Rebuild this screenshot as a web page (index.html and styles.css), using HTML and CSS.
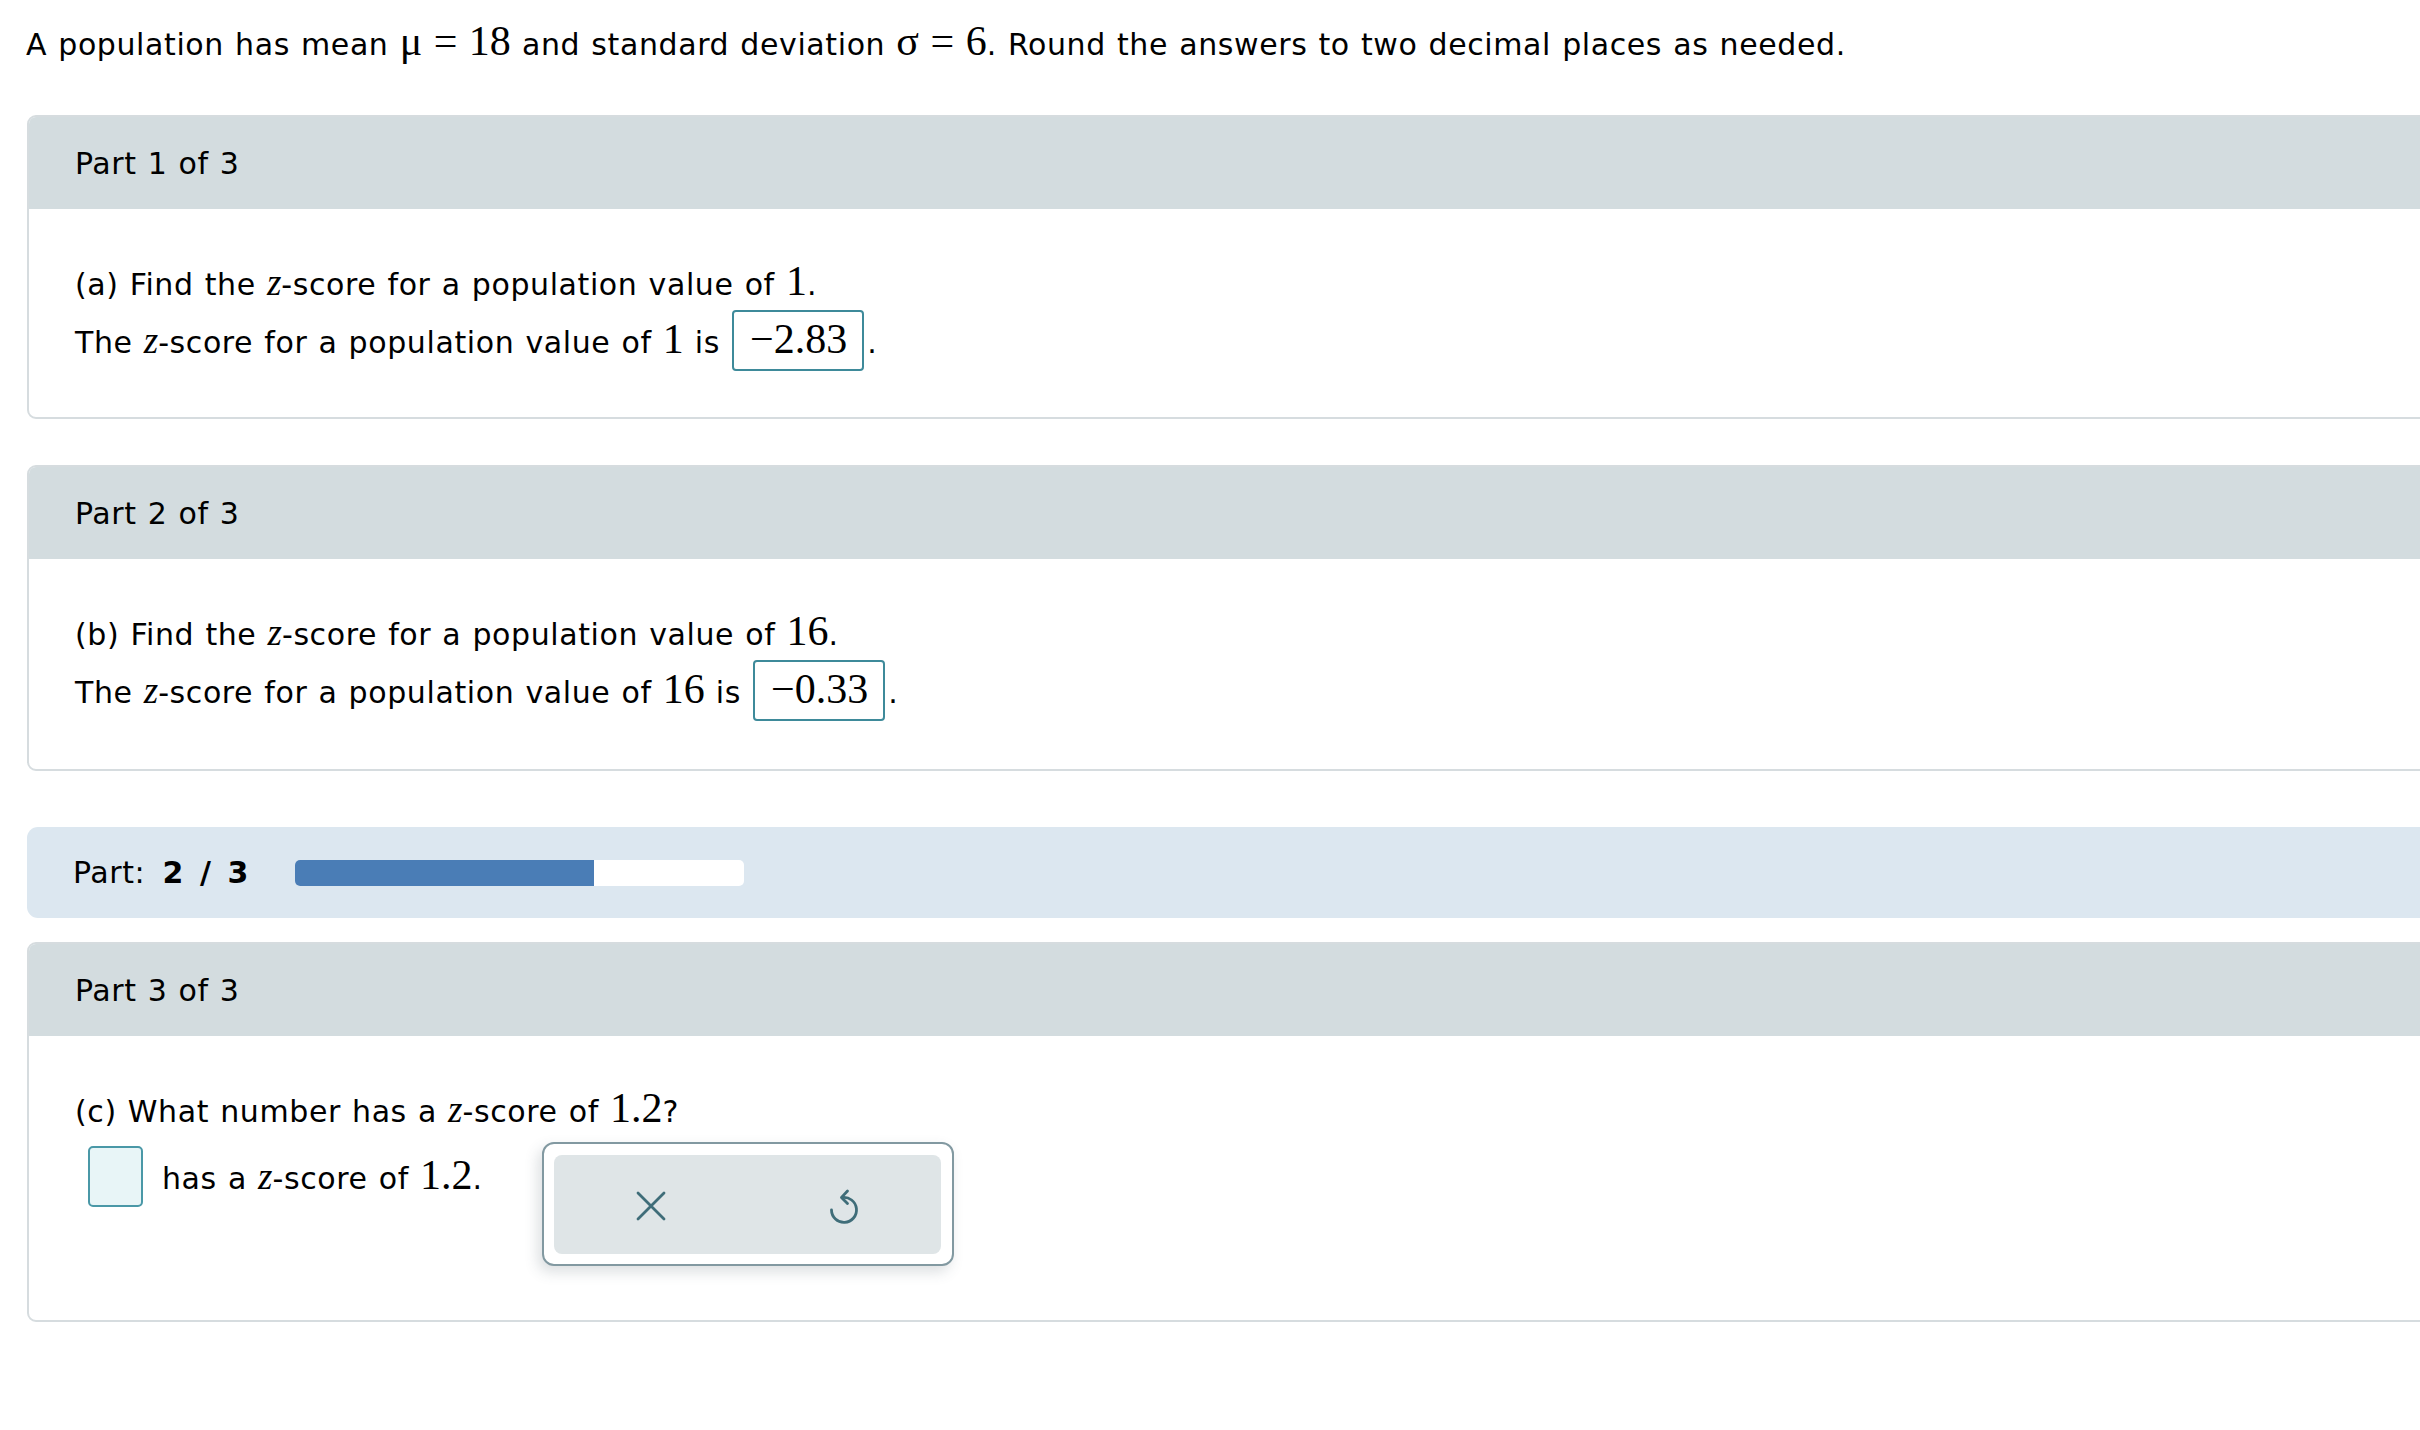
FILE: index.html
```html
<!DOCTYPE html>
<html>
<head>
<meta charset="utf-8">
<link rel="stylesheet" href="styles.css">
</head>
<body>
<div class="page">
  <div class="intro">A population has mean <span class="m">μ = 18</span> and standard deviation <span class="m">σ = 6</span>. Round the answers to two decimal places as needed.</div>

  <section class="card">
    <div class="card-head">Part 1 of 3</div>
    <div class="card-body">
      <div class="line">(a) Find the <i class="mi">z</i>-score for a population value of <span class="m">1</span>.</div>
      <div class="line2">
        <span class="txt">The <i class="mi">z</i>-score for a population value of <span class="m">1</span> is</span>
        <span class="ans">−2.83</span>
        <span class="txt dot">.</span>
      </div>
    </div>
  </section>

  <section class="card card-two">
    <div class="card-head">Part 2 of 3</div>
    <div class="card-body">
      <div class="line">(b) Find the <i class="mi">z</i>-score for a population value of <span class="m">16</span>.</div>
      <div class="line2">
        <span class="txt">The <i class="mi">z</i>-score for a population value of <span class="m">16</span> is</span>
        <span class="ans">−0.33</span>
        <span class="txt dot">.</span>
      </div>
    </div>
  </section>

  <div class="progress">
    <span class="prog-label">Part: <b>2 / 3</b></span>
    <div class="track"><div class="fill" style="width: 66.67%"></div></div>
  </div>

  <section class="card card-last">
    <div class="card-head">Part 3 of 3</div>
    <div class="card-body body-last">
      <div class="line">(c) What number has a <i class="mi">z</i>-score of <span class="m">1.2</span>?</div>
      <div class="line2 line2-c">
        <span class="input">&nbsp;</span>
        <span class="txt after-input">has a <i class="mi">z</i>-score of <span class="m">1.2</span>.</span>
        <div class="popup">
          <div class="popup-inner">
            <button class="tool" aria-label="Clear">
              <svg width="30" height="30" viewBox="0 0 30 30"><path d="M2 2 L28 28 M28 2 L2 28" fill="none" stroke="#3f6d79" stroke-width="2.8" stroke-linecap="round"/></svg>
            </button>
            <button class="tool" aria-label="Undo">
              <svg width="34" height="40" viewBox="0 0 34 40"><path d="M15 11.6 A12.5 12.5 0 1 1 4.5 24" fill="none" stroke="#3f6d79" stroke-width="2.8" stroke-linecap="round"/><path d="M20.5 5 L14.5 11.4 L20.5 17.5" fill="none" stroke="#3f6d79" stroke-width="2.8" stroke-linecap="round" stroke-linejoin="round"/></svg>
            </button>
          </div>
        </div>
      </div>
    </div>
  </section>
</div>
</body>
</html>
```

FILE: styles.css
```css
html, body {
  margin: 0;
  padding: 0;
  overflow: hidden;
  background: #ffffff;
}

.page {
  font-family: "DejaVu Sans", Verdana, sans-serif;
  font-size: 30px;
  color: #000;
  padding: 25px 0 0 27px;
  overflow: hidden;
  letter-spacing: 0.6px;
}

.intro {
  line-height: 40px;
  margin-left: -1px;
  word-spacing: 1px;
}

.m {
  font-family: "Liberation Serif", "Times New Roman", serif;
  font-size: 42px;
  line-height: 0;
  letter-spacing: 0;
}

.mi {
  font-family: "Liberation Serif", "Times New Roman", serif;
  font-style: italic;
  font-size: 37px;
  line-height: 0;
  letter-spacing: 0;
}

.card {
  margin-top: 50px;
  margin-right: -60px;
  border: 2px solid #d6dcdf;
  border-radius: 9px;
  overflow: hidden;
  background: #fff;
}

.card + .card {
  margin-top: 46px;
}

.card-head {
  background: #d3dcdf;
  height: 92px;
  display: flex;
  align-items: center;
  padding-left: 46px;
  word-spacing: 1px;
}

.card-body {
  padding: 56px 0 46px 46px;
}

.card-two .card-body {
  padding-bottom: 48px;
}

.line {
  line-height: 40px;
  word-spacing: 1px;
}

.line2 {
  display: flex;
  align-items: baseline;
  margin-top: 5px;
  position: relative;
}

.txt {
  line-height: 40px;
  word-spacing: 1px;
  white-space: nowrap;
}

.ans {
  font-family: "Liberation Serif", "Times New Roman", serif;
  font-size: 42px;
  line-height: 42px;
  letter-spacing: 0;
  border: 2px solid #3e8a9a;
  border-radius: 4px;
  padding: 6px 15px 9px 16px;
  margin-left: 12px;
  margin-right: 3px;
  white-space: nowrap;
}

.progress {
  margin-top: 56px;
  margin-right: -60px;
  height: 91px;
  background: #dce7f0;
  border-radius: 11px;
  display: flex;
  align-items: center;
  padding-left: 46px;
}

.prog-label {
  word-spacing: 2px;
}

.prog-label b {
  font-weight: bold;
  margin-left: 5px;
  word-spacing: 5px;
}

.track {
  margin-left: 46px;
  width: 449px;
  height: 26px;
  background: #ffffff;
  border-radius: 5px;
  overflow: hidden;
}

.fill {
  height: 100%;
  background: #4a7db6;
}

.card.card-last {
  margin-top: 24px;
}

.body-last {
  padding-bottom: 113px;
}

.line2-c {
  margin-top: 14px;
}

.input {
  box-sizing: border-box;
  width: 55px;
  margin-left: 13px;
  font-family: "Liberation Serif", "Times New Roman", serif;
  font-size: 42px;
  line-height: 42px;
  padding: 6px 0 9px 0;
  border: 2px solid #4a98a7;
  border-radius: 5px;
  background: #e8f5f7;
  overflow: hidden;
}

.after-input {
  margin-left: 19px;
}

.popup {
  position: absolute;
  left: 467px;
  top: -4px;
  width: 412px;
  height: 124px;
  box-sizing: border-box;
  border: 2px solid #8299a1;
  border-radius: 12px;
  background: #ffffff;
  padding: 11px 11px 10px 10px;
  box-shadow: -4px 6px 14px rgba(60, 80, 90, 0.18);
}

.popup-inner {
  display: flex;
  height: 100%;
  background: #dfe5e7;
  border-radius: 8px;
}

.tool {
  flex: 1;
  border: none;
  background: transparent;
  display: flex;
  align-items: center;
  justify-content: center;
  padding: 0;
  padding-top: 2px;
}
```
